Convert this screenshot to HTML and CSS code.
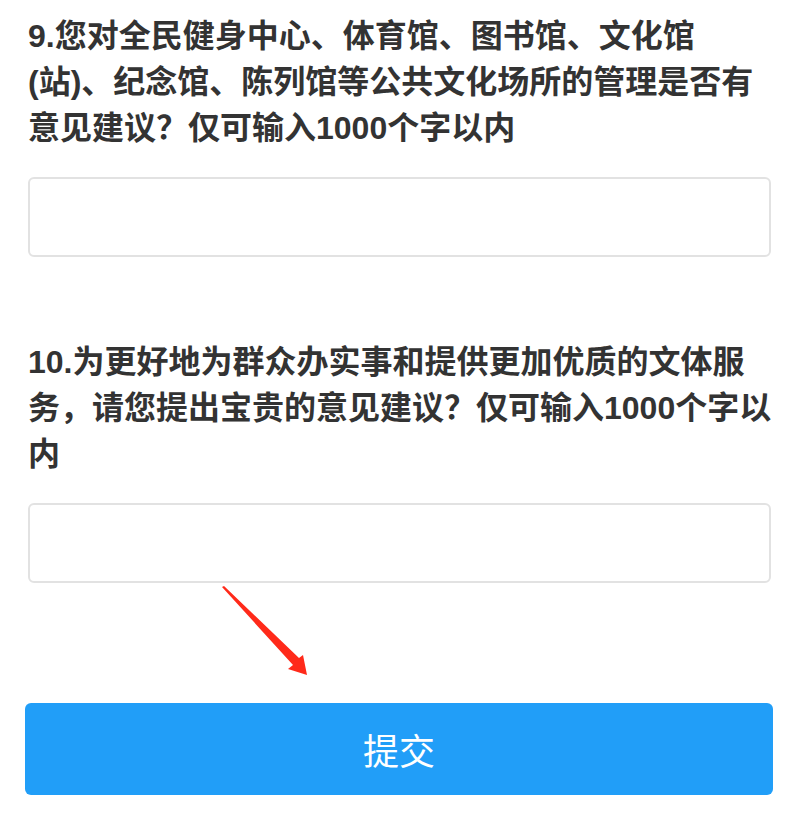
FILE: index.html
```html
<!DOCTYPE html>
<html lang="zh-CN">
<head>
<meta charset="utf-8">
<title>问卷</title>
<link rel="stylesheet" href="styles.css">
</head>
<body>
<main class="form">
  <section class="question">
    <p class="q-title">9.您对全民健身中心、体育馆、图书馆、文化馆(站)、纪念馆、陈列馆等公共文化场所的管理是否有意见建议？仅可输入1000个字以内</p>
    <textarea class="answer-box"></textarea>
  </section>
  <section class="question question-next">
    <p class="q-title">10.为更好地为群众办实事和提供更加优质的文体服务，请您提出宝贵的意见建议？仅可输入1000个字以内</p>
    <textarea class="answer-box"></textarea>
  </section>
  <button class="submit" type="button">提交</button>
  <svg class="arrow" width="798" height="830" viewBox="0 0 798 830" aria-hidden="true">
    <polygon points="222,587 224,586 299,658 303,655 307,675 288,669 293,665" fill="#ff2a1a"/>
  </svg>
</main>
</body>
</html>
```

FILE: styles.css
```css
html, body {
  margin: 0;
  padding: 0;
  background: #ffffff;
}

.form {
  position: relative;
  padding: 13px 25px 0 25px;
  font-family: "Liberation Sans", "Noto Sans CJK SC", sans-serif;
  color: #333333;
}

.question {
  padding-left: 3px;
}

.question-next {
  margin-top: 82px;
}

.q-title {
  margin: 0;
  font-size: 32px;
  font-weight: 700;
  line-height: 46px;
}

.answer-box {
  display: block;
  box-sizing: border-box;
  width: calc(100% - 2px);
  height: 80px;
  margin: 26px 0 0 0;
  border: 2px solid #e2e2e2;
  border-radius: 6px;
  background: #ffffff;
  resize: none;
  outline: none;
  padding: 0;
}

.submit {
  display: block;
  box-sizing: border-box;
  width: 100%;
  height: 92px;
  margin-top: 120px;
  border: none;
  border-radius: 6px;
  background: #219ef8;
  color: #ffffff;
  font-family: "Liberation Sans", "Noto Sans CJK SC", sans-serif;
  font-size: 36px;
  font-weight: 400;
  cursor: pointer;
}

.arrow {
  position: absolute;
  left: 0;
  top: 0;
  pointer-events: none;
}
```
